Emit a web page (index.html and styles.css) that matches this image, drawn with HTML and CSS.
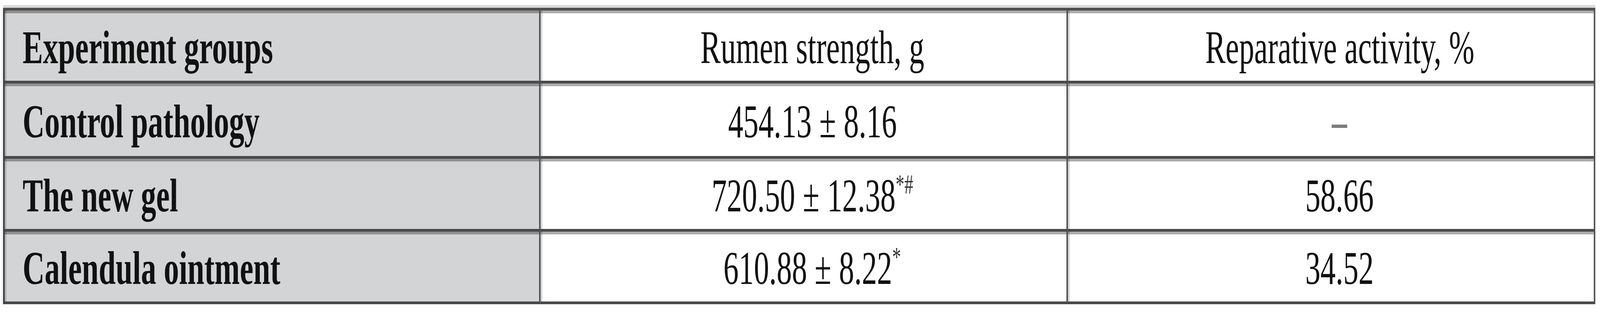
FILE: index.html
```html
<!DOCTYPE html>
<html lang="en">
<head>
<meta charset="utf-8">
<title>Experiment groups</title>
<link rel="stylesheet" href="styles.css">
</head>
<body>
<main class="sheet">
  <table class="data">
    <colgroup>
      <col class="col-group">
      <col class="col-value">
      <col class="col-value">
    </colgroup>
    <tr class="row-head">
      <th class="group"><span class="txt">Experiment groups</span></th>
      <th class="value"><span class="txt">Rumen strength, g</span></th>
      <th class="value"><span class="txt">Reparative activity, %</span></th>
    </tr>
    <tr class="row-a">
      <td class="group"><span class="txt">Control pathology</span></td>
      <td class="value"><span class="txt">454.13 ± 8.16</span></td>
      <td class="value"><span class="txt dash">–</span></td>
    </tr>
    <tr class="row-b">
      <td class="group"><span class="txt">The new gel</span></td>
      <td class="value"><span class="txt">720.50 ± 12.38<sup class="mark">*#</sup></span></td>
      <td class="value"><span class="txt">58.66</span></td>
    </tr>
    <tr class="row-c">
      <td class="group"><span class="txt">Calendula ointment</span></td>
      <td class="value"><span class="txt">610.88 ± 8.22<sup class="mark">*</sup></span></td>
      <td class="value"><span class="txt">34.52</span></td>
    </tr>
  </table>
</main>
<script src="fit.js"></script>
</body>
</html>
```

FILE: fit.js
```js
(function () {
  /* glyphs keep the reference's proportions when the window is narrower than 6313px */
  var DESIGN_WIDTH = 6313;
  function fit() {
    var sx = Math.min(1, window.innerWidth / DESIGN_WIDTH);
    document.documentElement.style.setProperty('--sx', String(sx));
  }
  fit();
  window.addEventListener('resize', fit);
})();
```

FILE: styles.css
```css
:root {
  --sx: 1;
  --vline: 0.111vw;   /* 7px of 6313 */
}

html, body {
  margin: 0;
  padding: 0;
  background: #ffffff;
  overflow: hidden;
}

body {
  font-family: "Liberation Serif", "Times New Roman", serif;
  color: #111111;
}

.sheet {
  display: block;
  padding: 20px 0 0 0.206vw;
}

.data {
  width: 99.49vw;
  table-layout: fixed;
  border-collapse: separate;
  border-spacing: 0;
  border-top: 7px solid #4e4e4e;
  border-left: var(--vline) solid #3a3a3a;
  box-shadow: 0 -7px 0 #dadada, calc(-1 * var(--vline)) 0 0 #f0f0f0;
  font-size: 120px;
  line-height: 1;
}

.col-group { width: 33.49vw; }
.col-value { width: 32.95vw; }

.data th,
.data td {
  box-sizing: border-box;
  border-right: var(--vline) solid #555555;
  border-bottom: 7px solid #4a4a4a;
  vertical-align: middle;
  padding: 9px 0 0 1.109vw;
  box-shadow: inset var(--vline) 0 0 rgba(0, 0, 0, 0.16), inset 0 7px 0 rgba(0, 0, 0, 0.32);
  white-space: nowrap;
  overflow: hidden;
}

.row-head th { height: 187px; }
.row-a td { height: 193px; }
.row-b td { height: 187px; }
.row-c td { height: 186px; }

.txt {
  display: inline-block;
  transform: scaleX(var(--sx));
}

.data .group {
  background: #d3d4d6;
  font-weight: bold;
  text-align: left;
}

.data .group .txt {
  transform-origin: 0 50%;
}

.data .value {
  background: #ffffff;
  font-weight: normal;
  text-align: center;
}

.data .value .txt {
  transform-origin: 50% 50%;
}

.dash {
  color: #7c7c7c;
  font-weight: bold;
}

.mark {
  font-size: 0.58em;
  line-height: 0;
  vertical-align: 0.66em;
  color: #333333;
}
```
